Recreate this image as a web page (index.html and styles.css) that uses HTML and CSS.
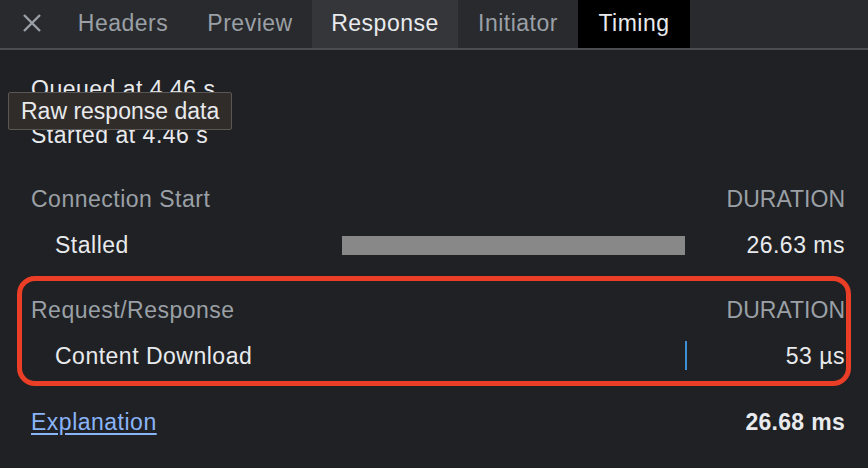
FILE: index.html
```html
<!DOCTYPE html>
<html>
<head>
<meta charset="utf-8">
<link rel="stylesheet" href="styles.css">
</head>
<body>
<div class="panel">
  <div class="tabbar">
    <div class="tab tab-close">
      <svg width="20" height="20" viewBox="0 0 20 20"><path d="M2 2 L18 18 M18 2 L2 18" stroke="#9aa0a6" stroke-width="2.4" stroke-linecap="butt"/></svg>
    </div>
    <div class="tab tab-headers">Headers</div>
    <div class="tab tab-preview">Preview</div>
    <div class="tab tab-response selected">Response</div>
    <div class="tab tab-initiator">Initiator</div>
    <div class="tab tab-timing active">Timing</div>
  </div>
  <div class="content">
    <div class="times">
      <div class="row">Queued at 4.46 s</div>
      <div class="row">Started at 4.46 s</div>
    </div>
    <div class="section">
      <div class="grid">
        <div class="cell head">Connection Start</div>
        <div class="cell"></div>
        <div class="cell head right caps">DURATION</div>
        <div class="cell sub">Stalled</div>
        <div class="cell barcell"><div class="bar"></div></div>
        <div class="cell val right">26.63 ms</div>
      </div>
    </div>
    <div class="section highlighted">
      <div class="grid">
        <div class="cell head">Request/Response</div>
        <div class="cell"></div>
        <div class="cell head right caps">DURATION</div>
        <div class="cell sub">Content Download</div>
        <div class="cell barcell"><div class="tick"></div></div>
        <div class="cell val right">53 µs</div>
      </div>
    </div>
    <div class="section footer">
      <div class="grid">
        <div class="cell"><a class="link" href="#">Explanation</a></div>
        <div class="cell"></div>
        <div class="cell val right total">26.68 ms</div>
      </div>
    </div>
    <div class="tooltip">Raw response data</div>
  </div>
</div>
</body>
</html>
```
FILE: styles.css
```css
html, body {
  margin: 0;
  padding: 0;
  background: #202124;
}
body {
  width: 868px;
  height: 468px;
  overflow: hidden;
  font-family: "Liberation Sans", Arial, sans-serif;
  font-size: 23px;
  letter-spacing: 0.5px;
  color: #e8eaed;
}
.panel {
  display: flex;
  flex-direction: column;
  height: 468px;
}
.tabbar {
  display: flex;
  height: 48px;
  background: #292a2d;
  border-bottom: 2px solid #4a4c50;
  flex: 0 0 auto;
}
.tab {
  display: flex;
  align-items: center;
  justify-content: center;
  height: 46px;
  padding-bottom: 2px;
  color: #9aa0a6;
  flex: 0 0 auto;
}
.tab-close { width: 58px; justify-content: flex-start; padding-left: 22px; box-sizing: border-box; }
.tab-close svg { display: block; margin-top: 2px; }
.tab-headers { width: 130px; }
.tab-preview { width: 124px; }
.tab-response { width: 146px; }
.tab-initiator { width: 120px; }
.tab-timing { width: 112px; }
.tab.selected { background: #35363a; color: #e8eaed; }
.tab.active { background: #000000; color: #e8eaed; }

.content {
  position: relative;
  flex: 1;
  padding: 16px 23px 0 31px;
}
.times .row {
  height: 46px;
  display: flex;
  align-items: center;
  color: #e8eaed;
}
.section { margin-top: 18px; }
.section.highlighted { margin-top: 19px; position: relative; }
.section.footer { margin-top: 20px; }
.highlighted::after {
  content: "";
  position: absolute;
  left: -14px;
  right: -6px;
  top: -11px;
  bottom: -7px;
  border: 5px solid #ea3e26;
  border-radius: 18px;
  pointer-events: none;
}
.grid {
  display: grid;
  grid-template-columns: 311px 343px 1fr;
  grid-auto-rows: 46px;
}
.cell {
  display: flex;
  align-items: center;
}
.cell.right { justify-content: flex-end; }
.head { color: #9aa0a6; }
.caps { letter-spacing: 0; }
.sub { padding-left: 24px; color: #e8eaed; }
.val { color: #e8eaed; }
.total { font-weight: bold; letter-spacing: 0.3px; }
.bar {
  flex: 0 0 343px;
  height: 19px;
  background: #888888;
}
.tick {
  flex: 0 0 2px;
  height: 29px;
  background: #3d8fd6;
  margin-left: 343px;
  margin-top: -2px;
}
.link {
  color: #8ab4f8;
  text-decoration: underline;
  text-underline-offset: 3px;
}
.tooltip {
  position: absolute;
  left: 8px;
  top: 42px;
  width: 224px;
  height: 38px;
  box-sizing: border-box;
  padding-left: 12px;
  display: flex;
  align-items: center;
  background: #302c29;
  border: 1px solid #5b5754;
  border-radius: 2px;
  color: #e8eaed;
  letter-spacing: 0;
}
```
